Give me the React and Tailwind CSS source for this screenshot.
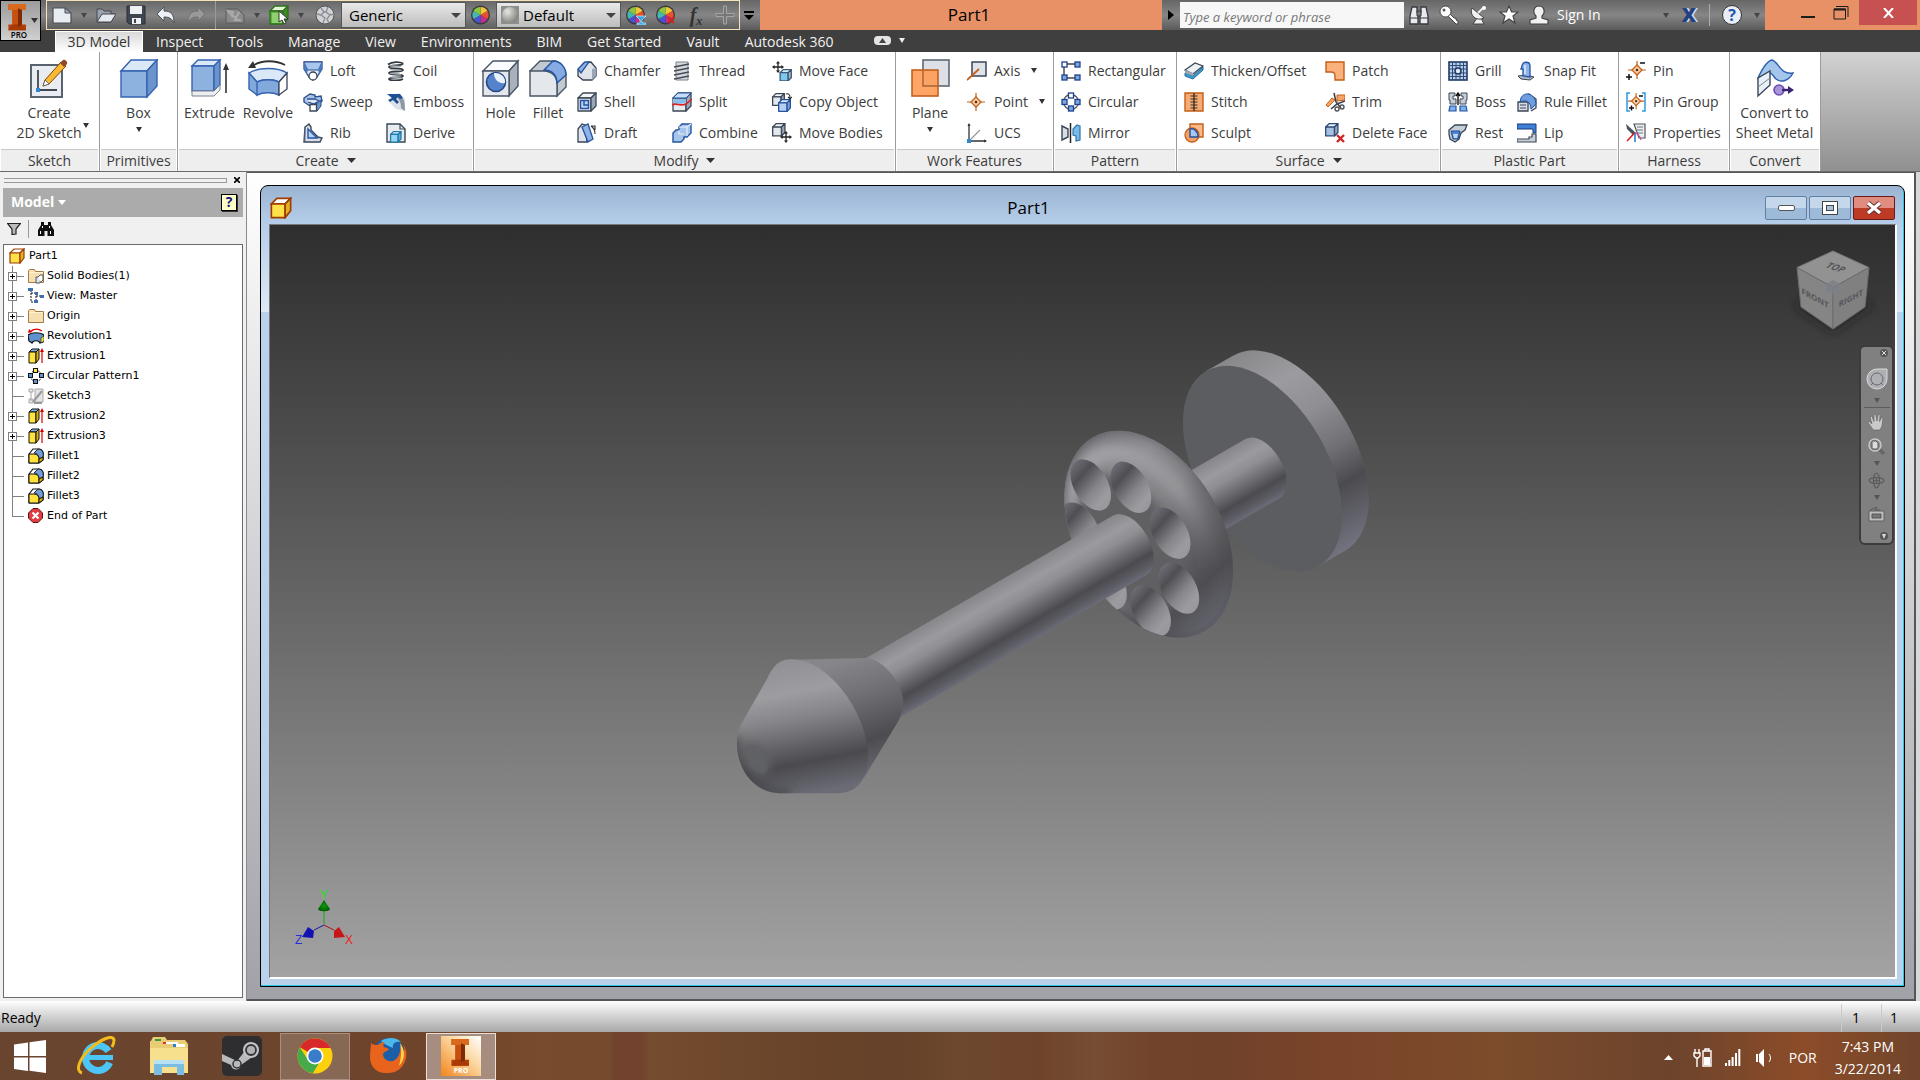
import { useId } from 'react';

const Svg = ({ s = 20, vb = '0 0 20 20', children }) => (
    <svg width={s} height={s} viewBox={vb} fill="none" className="shrink-0" aria-hidden="true">{children}</svg>
);

const Caret = ({ w = 7, color = '#333', className = '' }) => (
    <svg width={w} height="5" viewBox="0 0 10 6" className={`shrink-0 ${className}`} preserveAspectRatio="none" aria-hidden="true">
        <path d="M0 0h10L5 6z" fill={color} />
    </svg>
);

/* ---------- shared bits for the ribbon icons ---------- */

const B = '#2d4f8c';
const D = '#3b4656';
const O = '#c2601c';

const Cube = ({ x = 0, y = 0, s = 1, front = '#c9d3de', top = '#f4f6f9', side = '#9aa7b8', stroke = D }) => (
    <g transform={`translate(${x} ${y}) scale(${s})`} stroke={stroke} strokeWidth={1.3 / Math.max(s, 0.6)} strokeLinejoin="round">
        <path d="M1 6l5-5h13l-5 5z" fill={top} />
        <path d="M1 6h13v13H1z" fill={front} />
        <path d="M14 6l5-5v13l-5 5z" fill={side} />
    </g>
);

const MoveArrows = ({ x, y }) => (
    <g transform={`translate(${x} ${y})`}>
        <path d="M6 2v8M2 6h8" stroke="#222" strokeWidth="1.3" />
        <path d="M6 0l2 2.6H4zM6 12l2-2.6H4zM0 6l2.6-2v4zM12 6L9.4 4v4z" fill="#222" />
    </g>
);

const RedX = ({ x, y, s = 7 }) => (
    <path d={`M${x} ${y}l${s} ${s}M${x + s} ${y}l${-s} ${s}`} stroke="#d02525" strokeWidth="2.4" />
);

const Diamond = ({ x = 0, y = 0 }) => (
    <g transform={`translate(${x} ${y})`}>
        <path d="M9 0v18M0 9h18" stroke={O} strokeWidth="1.2" />
        <path d="M9 4l5 5-5 5-5-5z" fill="#fbcfa6" stroke={O} strokeWidth="1.3" />
        <circle cx="9" cy="9" r="1.3" fill="#5a2a0a" />
    </g>
);

const Node = ({ x, y, fill = '#7fa6dd' }) => (
    <rect x={x} y={y} width="5" height="5" fill={fill} stroke="#1e418e" strokeWidth="1.3" />
);

const small = {
    loft: <Svg><path d="M1 1h18v7l-5 8-4 3-4-3-5-8z" fill="#e4edf8" stroke={B} strokeWidth="1.3" /><path d="M1 1h18l-3 8H4z" fill="#a9c6ec" stroke={B} /><path d="M1 1l4 7-1 5-3-5zM19 1l-4 7 1 5 3-5z" fill="#4c78be" /><circle cx="10" cy="15" r="4" fill="#fff" stroke={D} strokeWidth="1.3" /></Svg>,
    sweep: <Svg><path d="M1 6l6-4 5 1v2l6-1 1 5-4 4-5-1-3 2-6-4z" fill="#a9c5ea" stroke={B} strokeWidth="1.4" /><path d="M4 7h8l4 2-5 3-6-2" stroke={B} strokeWidth="1.3" fill="#dbe7f6" /><path d="M13 12l5-4v6l-4 5z" fill="#6d96d0" stroke={B} /><path d="M7 12.500h6.500V19H7z" fill="#fff" stroke={D} strokeWidth="1.3" /></Svg>,
    rib: <Svg><path d="M2 4l4-3 2 3v3l7 7 4 1-2 4H1z" fill="#d9dfe8" stroke={D} strokeWidth="1.4" /><path d="M5 6l9 9H5z" fill="#b9d1f2" stroke="#2856ac" strokeWidth="1.4" /><path d="M2 4v14" stroke="#5f6c80" /></Svg>,
    coil: <Svg><path d="M2 3.500c4-3 12-3 15-1M17 2.500c0 3-14 1-14 3.500s14 .5 14 3-14 .5-14 3 14 .5 14 3-14 .5-14 3c1 2 10 2 14 0" stroke="#333a42" strokeWidth="1.8" /><path d="M4 4.500l11 1M4 8.500l11 1M4 12.500l11 1M4 16l11 1" stroke="#aab0b8" strokeWidth="1" /></Svg>,
    emboss: <Svg><path d="M5 5l8-4 6 6v12l-9-2-7-7z" fill="#dce1e7" /><path d="M14 4c4 2 5 6 5 15l-4-3c0-5-1-8-4-10z" fill="#8b98a8" /><path d="M1 2h13l3 4-3 1-2-2-2 2 3 3-2 2-4-4-3 2-2-2 4-2z" fill="#1c4f94" /></Svg>,
    derive: <Svg><path d="M1 1h13l5 5v13H1z" fill="#e8ecf0" stroke={D} strokeWidth="1.4" /><path d="M14 1v5h5" stroke={D} strokeWidth="1.2" /><Cube x={4} y={8} s={0.58} front="#9ad6f3" top="#e2f5fd" side="#5fb0da" stroke="#1f79ac" /></Svg>,
    chamfer: <Svg><path d="M1 9l6-7 7-1 5 6v8l-4 4H6l-5-4z" fill="#dfe4ea" stroke={D} strokeWidth="1.4" /><path d="M1 8l7-7h4l-8 11z" fill="#8fb3e4" stroke="#24539f" strokeWidth="1.3" /><path d="M15 8l4-1v8l-4 4z" fill="#9aa6b5" /></Svg>,
    shell: <Svg><Cube front="#e4e8ee" /><path d="M3.500 8.500h8v8h-8z" fill="#bcd3f3" stroke="#24539f" strokeWidth="1.5" /><path d="M7 9v4h4" stroke="#24539f" strokeWidth="1.5" /></Svg>,
    draft: <Svg><path d="M1 6l4-5 3 1 2 17H1z" fill="#dfe4ea" stroke={D} strokeWidth="1.3" /><path d="M5 4l6-3 5 15-5 3z" fill="#8fb3e4" stroke="#24539f" strokeWidth="1.3" /><path d="M14 3h4v4M14 3c3 2 4 5 4 8" stroke="#333" strokeWidth="1.2" /></Svg>,
    thread: <Svg><path d="M4 1h12v18H4z" fill="#d5d9de" stroke="#7a828d" /><path d="M2 6l15-3M2 10l15-3M2 14l15-3M2 18l15-3" stroke="#444b55" strokeWidth="1.5" /></Svg>,
    split: <Svg><Cube front="#e9edf2" /><path d="M1 6l5-5h13l-5 5z" fill="#c4ddf8" stroke="#24539f" /><path d="M1 7h13v5c-4-2-7 2-13 0z" fill="#8dbbea" /><path d="M0 13c4-3 7 2 14-1l6-5" stroke="#d22" strokeWidth="1.6" /></Svg>,
    combine: <Svg><path d="M1 10l3-3h3V4l3-3h9v9l-4 4h-3v2l-3 3H1z" fill="#a6c5ea" stroke="#24539f" strokeWidth="1.4" /><path d="M7 4h8l4-3M15 4v9M7 7v4h5" stroke="#e7f1fc" strokeWidth="1.1" /></Svg>,
    moveFace: <Svg><MoveArrows x={0} y={0} /><Cube x={7.5} y={8} s={0.62} front="#7cc8ee" top="#d6f1fd" side="#a9b5c2" stroke="#3c5878" /></Svg>,
    copyObject: <Svg><Cube x={0} y={1} s={0.65} front="#e4e8ee" /><Cube x={6} y={7} s={0.65} front="#b4cff0" top="#dfebfa" side="#7ba3da" stroke="#24539f" /><path d="M14 2c3-1 4 1 4 4M16 5l2 2 2-2" stroke="#333" strokeWidth="1.1" /></Svg>,
    moveBodies: <Svg><Cube x={0} y={0} s={0.68} front="#e4e8ee" /><MoveArrows x={8} y={8} /></Svg>,
    axis: <Svg><path d="M5 1h14v14H5z" fill="#dfe3e9" stroke={D} strokeWidth="1.5" /><path d="M0 19L12 8" stroke={O} strokeWidth="1.8" /></Svg>,
    point: <Svg><Diamond x={0} y={1} /></Svg>,
    ucs: <Svg><path d="M2 18V1M2 18h17" stroke="#333" strokeWidth="1.3" /><path d="M4 16L13 7" stroke="#9098a2" strokeWidth="1.2" /><path d="M0.500 3L2 0l1.500 3zM17 16.500l3 1.500-3 1.500z" fill="#333" /><rect x="0" y="16" width="4" height="4" fill="#2f86d2" /></Svg>,
    rectangular: <Svg><path d="M3 5v10M5 3h11M5 17h11" stroke="#444" strokeWidth="1.4" /><Node x={1} y={1} fill="#fff" /><Node x={14} y={1} /><Node x={1} y={14} /><Node x={14} y={14} /></Svg>,
    circular: <Svg><circle cx="10" cy="10" r="7.5" stroke="#555" strokeWidth="1.3" /><Node x={7.5} y={1} fill="#fff" /><Node x={1} y={7.5} /><Node x={14} y={7.5} /><Node x={7.5} y={14} /></Svg>,
    mirror: <Svg><path d="M1 3l6 3v8l-6 3z" fill="#d9dee5" stroke={D} strokeWidth="1.4" /><path d="M19 3l-3-1-4 4v6l3 1v5l4-1z" fill="#7db9e4" stroke="#2876ae" strokeWidth="1.2" /><path d="M9.500 0v20" stroke="#222" strokeWidth="1.5" /></Svg>,
    thicken: <Svg><path d="M1 12l8 3 10-9v3l-10 9-8-3z" fill="#3f9bd2" stroke="#1f6ca0" /><path d="M1 9l10-7 8 3-10 8z" fill="#eef1f4" stroke={D} strokeWidth="1.3" /><path d="M1 9v3l8 3v-3z" fill="#9ea8b4" /></Svg>,
    stitch: <Svg><path d="M1 1h18v18H1z" fill="#f6ab72" stroke={O} strokeWidth="1.4" /><path d="M10 1v18" stroke="#4a2a12" strokeWidth="1.4" /><path d="M6.500 4h7M6.500 7h7M6.500 10h7M6.500 13h7M6.500 16h7" stroke="#333" strokeWidth="1.2" /></Svg>,
    sculpt: <Svg><path d="M6 1h13v13H6z" fill="#fbb98a" stroke={O} strokeWidth="1.4" /><circle cx="8" cy="12" r="7" fill="#f3a164" stroke={O} strokeWidth="1.3" /><path d="M6 6c4-1 8 2 8 8H6z" fill="#a8c8f2" stroke="#24539f" strokeWidth="1.4" /></Svg>,
    patch: <Svg><path d="M1 1h18v18h-9v-4c0-3-1-4-4-4H1z" fill="#f9b27c" stroke={O} strokeWidth="1.4" /></Svg>,
    trim: <Svg><path d="M1 13l6-7 3 2-7 7zM12 3h8v5l-8 1z" fill="#f6a367" stroke={O} /><path d="M9 1l2 9 5 6M20 9l-8 3-6 5" stroke="#3b434d" strokeWidth="1.6" /><circle cx="12" cy="17" r="2" stroke="#555" strokeWidth="1.4" /><circle cx="17" cy="15" r="2" stroke="#555" strokeWidth="1.4" /></Svg>,
    deleteFace: <Svg><Cube x={0} y={0} s={0.68} front="#a6bfe2" top="#e8eff9" stroke="#2d4a78" /><RedX x={12} y={12} /></Svg>,
    grill: <Svg><rect x="1" y="1" width="18" height="18" fill="#b9cdea" stroke="#1d3a66" strokeWidth="1.6" /><path d="M4.500 1v18M8 1v18M12 1v18M15.500 1v18M1 4.500h18M1 8h18M1 12h18M1 15.500h18" stroke="#2d4a78" strokeWidth="1" /><circle cx="10" cy="10" r="3" fill="#dfe9f7" stroke="#1d3a66" strokeWidth="1.5" /></Svg>,
    boss: <Svg><path d="M1 1h6v3H5v3h3v5H2V8H1zM19 1h-6v3h2v3h-3v5h6V8h1z" fill="#c8ced6" stroke={D} /><path d="M2 14h6v5H1zM12 14h6l1 5h-7z" fill="#7fb0ee" stroke="#24539f" strokeWidth="1.2" /><path d="M10 13V2M8 4l2-3 2 3" stroke="#111" strokeWidth="1.4" /></Svg>,
    rest: <Svg><path d="M1 7l6-5h12l-2 5-4 3-2 6-4 3-5-3-1-5z" fill="#c6ced8" stroke={D} strokeWidth="1.3" /><path d="M3 8h9l-2 8H5z" fill="#4f86d0" stroke="#1f4c93" /><path d="M5 11h5l-1 4H6z" fill="#c3daf6" /></Svg>,
    snapFit: <Svg><path d="M1 15l8-1 8 2-4 3-9-1z" fill="#aeb8c5" stroke={D} /><path d="M5 5c0-5 8-5 8 0v11l-7-1V8H4z" fill="#8db5ea" stroke="#24539f" strokeWidth="1.3" /><path d="M8 4v9" stroke="#e8f1fc" strokeWidth="1.4" /></Svg>,
    ruleFillet: <Svg><path d="M1 10h10v9H1zM4 7l8-5 7 5v9l-5 3" fill="#d8dee6" stroke={D} strokeWidth="1.3" /><path d="M4 6c3-7 14-5 15 6l-5 5c0-7-5-10-11-7z" fill="#6f9edf" stroke="#24539f" /><path d="M3 13h6M3 16h6" stroke={D} /></Svg>,
    lip: <Svg><path d="M0 1h19v9h-3V6H0z" fill="#3f7fd8" stroke="#173a78" /><path d="M19 11v8H0v-3h12v-2h3v-3z" fill="#c9cfd7" stroke={D} strokeWidth="1.2" /></Svg>,
    pin: <Svg><g transform="translate(2 0)"><Diamond /></g><path d="M14 2h5M0 16h6M3 13v6" stroke="#111" strokeWidth="1.5" /></Svg>,
    pinGroup: <Svg><g transform="translate(2 1) scale(.9)"><Diamond /></g><path d="M4 1H1v18h3M16 1h3v18h-3" stroke="#2e9ae0" strokeWidth="1.5" /><path d="M13 4h4M3 16h5M5.500 13.500v5" stroke="#111" strokeWidth="1.4" /></Svg>,
    properties: <Svg><path d="M8 1h11v14h-6z" fill="#eceff2" stroke="#555" strokeWidth="1.2" /><path d="M11 4h6M11 7h6M11 10h6" stroke="#6a7380" /><path d="M0 1l10 9-3 2L1 6z" fill="#4a525c" /><path d="M9 10c-3 2-5 5-8 8" stroke="#d22" strokeWidth="1.6" /><path d="M9 10v9" stroke="#2d7fd8" strokeWidth="1.6" /><path d="M9 10c3 1 5 3 6 7" stroke="#d0489a" strokeWidth="1.2" /></Svg>,
};

const big = {
    sketch: (
        <Svg s={40} vb="0 0 40 40">
            <rect x="2" y="6" width="31" height="32" fill="#e9edf2" stroke="#59636f" strokeWidth="2" />
            <path d="M9 11v20h19" stroke="#3f4853" strokeWidth="1.8" />
            <rect x="7" y="29" width="4" height="4" fill="#2f86d2" />
            <path d="M14 27l2-6L32 3l5 4-17 18z" fill="#f9b933" stroke="#7a4a08" />
            <path d="M31 4l3-3c2-1 5 2 4 4l-3 3z" fill="#8d4a2a" />
            <path d="M14 27l2-6 4 4z" fill="#fff" stroke="#555" strokeWidth=".8" />
        </Svg>
    ),
    box: (
        <Svg s={40} vb="0 0 40 40">
            <path d="M2 12L12 1h26L28 12z" fill="#dbe8f8" stroke="#3563b0" strokeWidth="1.4" />
            <path d="M2 12h26v26H2z" fill="#8eb2e0" stroke="#3563b0" strokeWidth="1.4" />
            <path d="M28 12L38 1v26L28 38z" fill="#6c93cb" stroke="#3563b0" strokeWidth="1.4" />
        </Svg>
    ),
    extrude: (
        <Svg s={40} vb="0 0 40 40">
            <path d="M2 7l6-6h22l-6 6z" fill="#dbe8f8" stroke="#3563b0" strokeWidth="1.4" />
            <path d="M2 7h22v25H2z" fill="#8eb2e0" stroke="#3563b0" strokeWidth="1.4" />
            <path d="M24 7l6-6v25l-6 6z" fill="#6c93cb" stroke="#3563b0" strokeWidth="1.4" />
            <path d="M2 32h22l6-6v5l-6 6H2z" fill="#eceef1" stroke="#7a8490" />
            <path d="M36 34V8" stroke="#333" strokeWidth="1.6" /><path d="M36 4l3 7h-6z" fill="#333" />
        </Svg>
    ),
    revolve: (
        <Svg s={40} vb="0 0 40 40">
            <path d="M1 14c9-6 29-6 38 0l-8 9c-6-3-16-3-22 0z" fill="#dbe8f8" stroke="#3563b0" strokeWidth="1.4" />
            <path d="M1 14l8 9v13l-8-6zM9 23c6-3 16-3 22 0v13c-6-3-16-3-22 0z" fill="#82a9dc" stroke="#3563b0" strokeWidth="1.4" />
            <path d="M31 23l8-9v16l-8 6z" fill="#fff" stroke="#3b4656" strokeWidth="1.3" />
            <path d="M6 6c8-5 22-5 31 0" stroke="#333" strokeWidth="1.8" /><path d="M0 9l5-7 3 7z" fill="#333" />
        </Svg>
    ),
    hole: (
        <Svg s={40} vb="0 0 40 40">
            <path d="M2 12L12 2h25l-9 10z" fill="#fafbfc" stroke="#4a5564" strokeWidth="1.4" />
            <path d="M28 12l9-10v25L28 37z" fill="#a9b1bc" stroke="#4a5564" strokeWidth="1.4" />
            <path d="M2 12h26v25H2z" fill="#e4e7eb" stroke="#4a5564" strokeWidth="1.4" />
            <circle cx="15" cy="23" r="9.5" fill="#5483cb" stroke="#24488a" strokeWidth="1.6" />
            <path d="M13 14c7-1 12 5 11 10-5 1-11-2-11-10z" fill="#e9f1fb" />
        </Svg>
    ),
    fillet: (
        <Svg s={40} vb="0 0 40 40">
            <path d="M2 12L12 2h14c6 0 12 8 12 14v12l-9 9V25z" fill="#c3c9d1" stroke="#4a5564" strokeWidth="1.4" />
            <path d="M2 12h14c8 0 13 6 13 13v12H2z" fill="#e4e7eb" stroke="#4a5564" strokeWidth="1.4" />
            <path d="M16 11l9-9c8 0 13 7 13 14l-9 8c0-8-5-13-13-13z" fill="#85abe2" stroke="#24539f" strokeWidth="1.4" />
        </Svg>
    ),
    plane: (
        <Svg s={40} vb="0 0 40 40">
            <rect x="13" y="1" width="26" height="26" fill="#dde1e7" stroke="#5f6874" strokeWidth="1.6" />
            <rect x="2" y="11" width="26" height="26" fill="#ff9c55" fillOpacity=".9" stroke="#c2601c" strokeWidth="1.6" />
            <path d="M13 11v16h15" stroke="#a8673a" strokeWidth="1.4" />
        </Svg>
    ),
    convert: (
        <Svg s={40} vb="0 0 40 40">
            <path d="M3 19C8 8 12 2 17 1c7 2 8 15 21 13-4 8-12 10-17 6-3-3-4-6-6-6z" fill="#a5c6ec" stroke="#2f60ad" strokeWidth="1.4" />
            <path d="M3 19l12-7v14L3 37z" fill="#e8f0fa" stroke="#3b4656" strokeWidth="1.4" />
            <path d="M3 28l12-9" stroke="#7a8490" />
            <circle cx="24" cy="31" r="5" fill="#a993dd" stroke="#6b4db0" strokeWidth="1.6" />
            <path d="M27 31h7" stroke="#3a2470" strokeWidth="2.4" /><path d="M33 27l6 4-6 4z" fill="#3a2470" />
        </Svg>
    ),
};

/* ---------- ribbon ---------- */

const SmallButton = ({ icon, label, caret }) => (
    <button type="button" className="flex h-[31px] items-center gap-[7px] whitespace-nowrap text-sm text-[#3c3c3c]">
        {small[icon]}
        <span>{label}</span>
        {caret && <Caret w={6} className="ml-1" />}
    </button>
);

const Col = ({ width = '', items }) => (
    <div className={`flex flex-col items-start ${width}`}>
        {items.map(([icon, label, caret]) => <SmallButton key={label} icon={icon} label={label} caret={caret} />)}
    </div>
);

const BigButton = ({ icon, lines, caret, sideCaret, width }) => (
    <button type="button" className={`flex flex-col items-center self-start pt-1 text-sm leading-5 text-[#3c3c3c] ${width}`}>
        {big[icon]}
        <span className="relative mt-1 whitespace-nowrap text-center">
            {lines.map((l) => <span key={l} className="block">{l}</span>)}
            {sideCaret && <Caret w={6} className="absolute -right-2 top-5" />}
        </span>
        {caret && <Caret w={6} className="mt-1" />}
    </button>
);

const Panel = ({ title, width, caret, children }) => (
    <section className={`flex shrink-0 flex-col border-r border-[#9b9b9b] bg-white ${width}`}>
        <div className="flex h-[97px] pt-[3px]">{children}</div>
        <h2 className="mx-px flex h-[22px] items-center justify-center gap-2 border-t border-[#c9c9c9] bg-[#eeeeee] text-sm text-[#3c3c3c]">
            {title}
            {caret && <Caret w={9} />}
        </h2>
    </section>
);

const Ribbon = () => (
    <div className="flex h-[119px] overflow-hidden bg-linear-to-b from-[#d2d2d2] to-[#909090]">
        <Panel title="Sketch" width="w-[100px]">
            <BigButton icon="sketch" lines={['Create', '2D Sketch']} sideCaret width="w-[98px]" />
        </Panel>
        <Panel title="Primitives" width="w-[78px]">
            <BigButton icon="box" lines={['Box']} caret width="w-full" />
        </Panel>
        <Panel title="Create" width="w-[296px]" caret>
            <BigButton icon="extrude" lines={['Extrude']} width="ml-[3px] w-[57px]" />
            <BigButton icon="revolve" lines={['Revolve']} width="w-[60px] mr-[5px]" />
            <Col width="w-[83px]" items={[['loft', 'Loft'], ['sweep', 'Sweep'], ['rib', 'Rib']]} />
            <Col items={[['coil', 'Coil'], ['emboss', 'Emboss'], ['derive', 'Derive']]} />
        </Panel>
        <Panel title="Modify" width="w-[422px]" caret>
            <BigButton icon="hole" lines={['Hole']} width="ml-[3px] w-[47px]" />
            <BigButton icon="fillet" lines={['Fillet']} width="w-[48px] mr-[5px]" />
            <Col width="w-[95px]" items={[['chamfer', 'Chamfer'], ['shell', 'Shell'], ['draft', 'Draft']]} />
            <Col width="w-[100px]" items={[['thread', 'Thread'], ['split', 'Split'], ['combine', 'Combine']]} />
            <Col items={[['moveFace', 'Move Face'], ['copyObject', 'Copy Object'], ['moveBodies', 'Move Bodies']]} />
        </Panel>
        <Panel title="Work Features" width="w-[158px]">
            <BigButton icon="plane" lines={['Plane']} caret width="ml-1 w-[60px] mr-[7px]" />
            <Col items={[['axis', 'Axis', true], ['point', 'Point', true], ['ucs', 'UCS']]} />
        </Panel>
        <Panel title="Pattern" width="w-[123px]">
            <Col width="ml-[7px]" items={[['rectangular', 'Rectangular'], ['circular', 'Circular'], ['mirror', 'Mirror']]} />
        </Panel>
        <Panel title="Surface" width="w-[264px]" caret>
            <Col width="ml-[7px] w-[141px]" items={[['thicken', 'Thicken/Offset'], ['stitch', 'Stitch'], ['sculpt', 'Sculpt']]} />
            <Col items={[['patch', 'Patch'], ['trim', 'Trim'], ['deleteFace', 'Delete Face']]} />
        </Panel>
        <Panel title="Plastic Part" width="w-[178px]">
            <Col width="ml-[7px] w-[69px]" items={[['grill', 'Grill'], ['boss', 'Boss'], ['rest', 'Rest']]} />
            <Col items={[['snapFit', 'Snap Fit'], ['ruleFillet', 'Rule Fillet'], ['lip', 'Lip']]} />
        </Panel>
        <Panel title="Harness" width="w-[111px]">
            <Col width="ml-[7px]" items={[['pin', 'Pin'], ['pinGroup', 'Pin Group'], ['properties', 'Properties']]} />
        </Panel>
        <Panel title="Convert" width="w-[91px]">
            <BigButton icon="convert" lines={['Convert to', 'Sheet Metal']} width="w-[89px]" />
        </Panel>
    </div>
);

/* ---------- title bar ---------- */

const InventorMark = () => (
    <g>
        <path d="M3 0h22v7h-5v17h5v7H3v-7h5V7H3z" fill="#b5400c" />
        <path d="M3 0h22v7h-5L8 7H3z" fill="#d9691d" />
        <path d="M8 7l7 0v17H8z" fill="#c8500f" />
        <path d="M8 24h12l5 7H3z" fill="#a83a08" />
        <path d="M15 5l5 2v17l-5 3z" fill="#7e2a05" />
    </g>
);

const ColorWheel = ({ children }) => (
    <Svg>
        <circle cx="9.5" cy="10" r="9.5" fill="#3a3a3a" />
        <path d="M9.500 10V2a8 8 0 0 1 7 4z" fill="#f2c43a" />
        <path d="M9.500 10l7-4a8 8 0 0 1 0 8z" fill="#e8502e" />
        <path d="M9.500 10l7 4a8 8 0 0 1-7 4z" fill="#c02f8e" />
        <path d="M9.500 10v8a8 8 0 0 1-7-4z" fill="#4a52d0" />
        <path d="M9.500 10l-7 4a8 8 0 0 1 0-8z" fill="#45b6b4" />
        <path d="M9.500 10l-7-4a8 8 0 0 1 7-4z" fill="#8ac63e" />
        {children}
    </Svg>
);

const Quick = ({ label, children, width = 'w-[30px]' }) => (
    <button type="button" aria-label={label} className={`flex h-full items-center justify-center ${width}`}>{children}</button>
);

const StyleSelect = ({ label, value, ball }) => (
    <div className="relative h-[26px] w-[125px] border border-[#555] bg-linear-to-b from-[#e9e9e9] to-[#bdbdbd]">
        <select aria-label={label} className={`h-full w-full appearance-none text-[15px] leading-none text-black outline-none ${ball ? 'pl-[26px]' : 'pl-[7px]'}`}>
            <option>{value}</option>
        </select>
        {ball && (
            <span className="pointer-events-none absolute left-1 top-[3px] h-[18px] w-[18px] bg-[#8e8e8e] p-px">
                <span className="block h-full w-full rounded-full bg-radial-[at_35%_30%] from-[#e6e6e2] to-[#63635f]" />
            </span>
        )}
        <Caret w={10} color="#444" className="pointer-events-none absolute right-1 top-[10px]" />
    </div>
);

const TitleBar = () => (
    <header className="flex h-[30px] bg-[#e89066]">
        <div className="flex h-full bg-linear-to-b from-[#666666] via-[#868686] to-[#5b5b5b] pl-[46px]">
            <div className="flex h-full items-center border border-[#f2e3bb]">
                <Quick label="New">
                    <Svg><path d="M1 3h12l6 5v10H1z" fill="#e9edf2" stroke="#4a4f57" strokeWidth="1.2" /><path d="M13 3v5h6z" fill="#a7afba" stroke="#4a4f57" /></Svg>
                </Quick>
                <Quick label="New options" width="w-[14px]"><Caret w={6} color="#444" /></Quick>
                <Quick label="Open">
                    <Svg><path d="M1 17V4h5l2 2h7v3h4l-4 8z" fill="#9aa2ad" stroke="#42474f" /><path d="M1 17L6 9h14l-5 8z" fill="#e6e9ee" stroke="#42474f" /></Svg>
                </Quick>
                <Quick label="Save">
                    <Svg><path d="M1 1h18v18H3l-2-2z" fill="#3f4650" stroke="#2a2f36" /><path d="M4 1h12v8H4zM6 13h9v6H6z" fill="#eef0f3" /><path d="M8 14h2v4H8z" fill="#3f4650" /></Svg>
                </Quick>
                <Quick label="Undo">
                    <Svg><path d="M1 9l7-7v4c7 0 10 3 10 12-2-4-4-6-10-6v4z" fill="#eceff3" stroke="#4c525b" /></Svg>
                </Quick>
                <Quick label="Redo">
                    <Svg><path d="M19 9l-7-7v4C5 6 2 9 2 18c2-4 4-6 10-6v4z" fill="#999" stroke="#707070" /></Svg>
                </Quick>
                <span className="mx-1 h-full w-px bg-[#9a9a9a]" />
                <Quick label="Update">
                    <Svg><path d="M1 4h12l6 6v8H1z" fill="#8a8a8a" stroke="#5a5a5a" /><path d="M3 6l5 1-1 4zM6 9l6 5M14 7l-4 8h6" stroke="#aaa" strokeWidth="2" /></Svg>
                </Quick>
                <Quick label="Update options" width="w-[14px]"><Caret w={6} color="#444" /></Quick>
                <Quick label="Select">
                    <Svg><Cube front="#5db43f" top="#dff3d2" side="#3f8a28" stroke="#2f6f1d" /><path d="M3 8h10v10H3z" fill="#8ed070" /><path d="M10 6l9 8h-4l2 4-2 1-2-4-3 2z" fill="#fff" stroke="#333" /></Svg>
                </Quick>
                <Quick label="Select options" width="w-[14px]"><Caret w={6} color="#444" /></Quick>
                <Quick label="Material" width="w-[33px]">
                    <Svg><circle cx="10" cy="10" r="9" fill="#cfd1d4" stroke="#555" /><path d="M6 3l3 4-3 3 4 3-2 5M13 2l-2 5 4 3-3 4 2 4M2 9l4 1M15 10l4-1M9 7h3" stroke="#8a8d92" strokeWidth="1.3" /></Svg>
                </Quick>
                <StyleSelect label="Material style" value="Generic" />
                <Quick label="Appearance"><ColorWheel /></Quick>
                <StyleSelect label="Appearance style" value="Default" ball />
                <Quick label="Adjust appearance"><ColorWheel><path d="M10 11h10l-4 4v3h4v2h-9v-2h3v-3z" fill="#3ba7e0" stroke="#dff" strokeWidth=".6" /></ColorWheel></Quick>
                <Quick label="Clear appearance"><ColorWheel><RedX x={12} y={12} s={6} /></ColorWheel></Quick>
                <Quick label="Parameters"><span className="font-['Liberation_Serif',serif] text-xl font-bold italic leading-none text-[#333]">f<sub className="text-xs">x</sub></span></Quick>
                <Quick label="Add" width="w-[28px]">
                    <Svg><path d="M8.500 1h3v7.500H19v3h-7.500V19h-3v-7.500H1v-3h7.500z" fill="#777" stroke="#a5a5a5" /></Svg>
                </Quick>
            </div>
            <button type="button" aria-label="Customize" className="flex w-5 flex-col items-center justify-center gap-[2px] pr-[3px]">
                <span className="h-[2px] w-[10px] bg-black" />
                <Caret w={10} color="#000" />
            </button>
        </div>

        <h1 className="flex flex-1 items-center justify-center pl-4 text-[17px] text-black">Part1</h1>

        <div className="flex h-full items-center bg-linear-to-b from-[#666666] via-[#868686] to-[#5b5b5b]">
            <button type="button" aria-label="Collapse search" className="flex h-full w-[18px] items-center justify-center">
                <svg width="6" height="10" viewBox="0 0 6 10"><path d="M0 0l6 5-6 5z" fill="#000" /></svg>
            </button>
            <input aria-label="Search" placeholder="Type a keyword or phrase" className="h-[26px] w-[224px] bg-[#f7f7f7] pl-[3px] pt-1 text-[13px] italic placeholder:text-[#777]" />
            <Quick label="Find">
                <Svg><path d="M3 2h5v5l1 3v9H1v-8zM12 2h5l2 9v8h-8v-9l1-3z" fill="#e8eaee" stroke="#34393f" strokeWidth="1.3" /><path d="M8 6h4v5H8zM1 13h8M11 13h8" fill="#777" stroke="#34393f" /></Svg>
            </Quick>
            <Quick label="License">
                <Svg><path d="M8 10l9 9h2v-3l-2-1v-2h-2l-5-5" fill="#fff" stroke="#444" /><circle cx="6.5" cy="6.5" r="5.5" fill="#fff" stroke="#444" /><circle cx="5" cy="5" r="1.5" fill="#555" /></Svg>
            </Quick>
            <Quick label="Communication">
                <Svg><path d="M8 13l-4 6h11l-3-6" fill="#f1f1f1" stroke="#444" /><path d="M3 3c-3 7 4 14 12 10z" fill="#f1f1f1" stroke="#444" /><path d="M9 8l5-5" stroke="#f1f1f1" strokeWidth="1.8" /><circle cx="15" cy="3" r="2" fill="#fff" /></Svg>
            </Quick>
            <Quick label="Favorites">
                <Svg><path d="M10 1l2.600 6H19l-5 4 2 7-6-4-6 4 2-7-5-4h6.400z" fill="#fff" stroke="#444" strokeWidth="1.2" /></Svg>
            </Quick>
            <Quick label="Account">
                <Svg><path d="M1 19v-4l6-2v-2C3 7 5 1 10 1s7 6 3 10v2l6 2v4z" fill="#f1f1f1" stroke="#444" strokeWidth="1.2" /></Svg>
            </Quick>
            <button type="button" className="w-[104px] pl-[3px] text-left text-sm text-white">Sign In</button>
            <Quick label="Sign in options" width="w-4"><Caret w={6} color="#444" /></Quick>
            <Quick label="Exchange"><span className="text-xl font-extrabold leading-none text-[#24407e] [text-shadow:2px_0_#cfd9ee]">X</span></Quick>
            <span className="mx-[5px] h-[22px] w-px bg-[#aaa]" />
            <Quick label="Help" width="w-[34px]">
                <span className="flex h-5 w-5 items-center justify-center rounded-full border border-[#333] bg-[#e9eef6] text-base font-bold text-[#2456b0]">?</span>
            </Quick>
            <Quick label="Help options" width="w-4"><Caret w={6} color="#444" /></Quick>
        </div>

        <div className="flex items-start pl-[28px] pr-[3px]">
            <button type="button" aria-label="Minimize" className="flex h-[25px] w-[30px] items-center justify-center pt-2">
                <span className="h-[2px] w-[14px] bg-[#1d1d1d]" />
            </button>
            <button type="button" aria-label="Restore" className="flex h-[25px] w-[36px] items-center justify-center">
                <svg width="16" height="15" viewBox="0 0 16 15" fill="none" stroke="#1d1d1d"><path d="M3 1.500h12V12" /><path d="M1 4h11.500v10H1z" /><path d="M1 4.500h11.500" strokeWidth="2" /></svg>
            </button>
            <button type="button" aria-label="Close" className="flex h-[25px] w-[58px] items-center justify-center bg-[#c75050]">
                <svg width="11" height="10" viewBox="0 0 11 10"><path d="M1 0l9 10M10 0L1 10" stroke="#fff" strokeWidth="2" /></svg>
            </button>
        </div>
    </header>
);

const tabs = ['Inspect', 'Tools', 'Manage', 'View', 'Environments', 'BIM', 'Get Started', 'Vault', 'Autodesk 360'];

const Tabs = () => (
    <nav className="flex h-[22px] items-end bg-[#3f3f3f] pl-[55px] text-sm leading-5 text-[#f1f1f1]">
        <button type="button" className="h-[21px] w-[88px] border border-b-0 border-white bg-linear-to-b from-[#d9d9d9] to-white text-[#333]">3D Model</button>
        {tabs.map((t) => <button key={t} type="button" className="h-[21px] pl-[13px] pr-3">{t}</button>)}
        <button type="button" aria-label="Ribbon display" className="mb-[7px] ml-7 flex h-[9px] w-[17px] items-center justify-center rounded-sm bg-[#e4e4e4]">
            <Caret w={7} color="#444" className="rotate-180" />
        </button>
        <button type="button" aria-label="Ribbon options" className="mb-[9px] ml-2"><Caret w={6} color="#eee" /></button>
    </nav>
);

/* ---------- model browser ---------- */

const Extrusion = () => (
    <Svg s={16} vb="0 0 16 16"><path d="M1 4l3-3h7L9 4z" fill="#7fb0ea" stroke="#111" /><path d="M1 4h7v11H1z" fill="#ffe23a" stroke="#111" /><path d="M8 4l3-3v10l-3 4z" fill="#d8b400" stroke="#111" /><path d="M14 15V3" stroke="#d00" strokeWidth="1.2" /><path d="M14 0l2 4h-4z" fill="#d00" /></Svg>
);
const FilletIcon = () => (
    <Svg s={16} vb="0 0 16 16"><path d="M1 6l4-5h6c3 0 5 3 4 7v4l-4 3H1z" fill="#fff" stroke="#111" strokeWidth="1.2" /><path d="M6 5l4-4c4 0 6 4 5 8l-4 2c0-4-2-6-5-6z" fill="#6f9fdc" stroke="#223" /><path d="M1 6h5c3 0 5 2 5 5v4H1z" fill="#ffe23a" stroke="#111" /><path d="M11 11l4-2v3l-4 3z" fill="#e0b800" stroke="#111" /></Svg>
);
const Folder = ({ children }) => (
    <Svg s={16} vb="0 0 16 16"><path d="M.5 2.500l1-1h5l1 2h8v11H.5z" fill="#f6dfb0" stroke="#a07a48" /><path d="M1 4.500h14" stroke="#fff3d6" />{children}</Svg>
);
const PartCube = ({ s = 16 }) => (
    <Svg s={s} vb="0 0 16 16"><path d="M1 5l4-4h10l-4 4z" fill="#fff" stroke="#a03c00" strokeWidth="1.2" /><path d="M1 5h10v10H1z" fill="#ffe24a" stroke="#a03c00" strokeWidth="1.2" /><path d="M11 5l4-4v9l-4 5z" fill="#e3b021" stroke="#a03c00" strokeWidth="1.2" /></Svg>
);

const nodes = [
    ['Solid Bodies(1)', true, <Folder><path d="M8 9h5l-1 6H8z" fill="#dfe5ee" stroke="#555" /><path d="M10 9l2-2h3v5l-2 2" fill="#fff" stroke="#555" /></Folder>],
    ['View: Master', true, <Svg s={16} vb="0 0 16 16"><path d="M3 2v12h3M3 5h4M8 5v8M8 8h5" stroke="#111" strokeDasharray="2 1" /><path d="M0 0h5v3H0zM7 4h3v3H7zM12 7h4v3h-4zM6 12h4v3H6z" fill="#3c6fae" /></Svg>],
    ['Origin', true, <Folder />],
    ['Revolution1', true, <Svg s={16} vb="0 0 16 16"><path d="M0 7c4-3 12-3 16 0l-1 7-3 1c-1-3-7-3-8 0l-3-2z" fill="#5f93cf" stroke="#111" strokeWidth="1.2" /><path d="M13 10l3-2v5l-3 2z" fill="#ffe23a" stroke="#111" strokeWidth=".6" /><path d="M2 4c4-4 9-3 12-1" stroke="#d00" strokeWidth="1.4" /><path d="M0 5l1-4 3 3z" fill="#d00" /></Svg>],
    ['Extrusion1', true, <Extrusion />],
    ['Circular Pattern1', true, <Svg s={16} vb="0 0 16 16"><circle cx="8" cy="8" r="5.5" stroke="#111" strokeDasharray="2 1" /><rect x="5.5" y=".5" width="4" height="4" fill="#ffe23a" stroke="#111" /><rect x=".5" y="5.5" width="4" height="4" fill="#5f93cf" stroke="#111" /><rect x="11.5" y="5.5" width="4" height="4" fill="#5f93cf" stroke="#111" /><rect x="5.5" y="11.5" width="4" height="4" fill="#5f93cf" stroke="#111" /></Svg>],
    ['Sketch3', false, <Svg s={16} vb="0 0 16 16"><path d="M1 1h4v3H1zM3 4v9M1 11h4v4H1zM6 12l8-9M7 1h8v13H7z" stroke="#aaa" fill="#e4e4e4" /><path d="M5 14l9-11M6 15h8" stroke="#999" strokeWidth="2" /></Svg>],
    ['Extrusion2', true, <Extrusion />],
    ['Extrusion3', true, <Extrusion />],
    ['Fillet1', false, <FilletIcon />],
    ['Fillet2', false, <FilletIcon />],
    ['Fillet3', false, <FilletIcon />],
    ['End of Part', false, <Svg s={16} vb="0 0 16 16"><path d="M5 .5h5L14.500 5v5L10 14.500H5L.5 10V5z" fill="#e23b41" stroke="#5a1115" /><path d="M4.500 4.500l6 6M10.500 4.500l-6 6" stroke="#fff" strokeWidth="2.2" /></Svg>],
];

const Guide = ({ expandable, last }) => (
    <svg width="24" height="20" viewBox="0 0 24 20" className="shrink-0" shapeRendering="crispEdges" aria-hidden="true">
        <path d={last ? 'M8.500 0v10.500H20' : 'M8.500 0v20M8.500 10.500H20'} stroke="#808080" fill="none" />
        {expandable && (
            <>
                <rect x="4.5" y="6.5" width="8" height="8" fill="#fff" stroke="#808080" />
                <path d="M6 10.500h5M8.500 8v5" stroke="#000" />
            </>
        )}
    </svg>
);

const Browser = () => (
    <aside className="flex w-[247px] shrink-0 flex-col border-r border-[#8a8a8a] bg-[#f0f0f0] px-[3px] pb-[3px]">
        <div className="flex h-4 items-center gap-1 pl-px">
            <span className="h-[5px] flex-1 border-y border-r border-[#9a9a9a]" />
            <button type="button" aria-label="Close browser" className="flex w-3 justify-center">
                <svg width="6" height="6" viewBox="0 0 6 6"><path d="M0 0l6 6M6 0L0 6" stroke="#000" strokeWidth="1.6" /></svg>
            </button>
        </div>
        <div className="flex h-[29px] items-center bg-[#ababab] pb-px pl-2 pr-[6px]">
            <button type="button" className="flex items-center gap-1 text-sm font-bold text-white">Model<Caret w={8} color="#fff" /></button>
            <button type="button" aria-label="Help" className="ml-auto flex h-[17px] w-4 items-center justify-center border border-black bg-[#ffffc8] text-sm font-bold leading-none text-[#14147a] shadow-[1px_1px_0_#333]">?</button>
        </div>
        <div className="flex h-[27px] items-center pb-1 pl-1">
            <button type="button" aria-label="Filter">
                <svg width="14" height="12" viewBox="0 0 14 12" fill="none"><path d="M.5 .5h13L9 6v5l-4 .5V6z" fill="#bbb" stroke="#222" strokeWidth="1.2" /></svg>
            </button>
            <span className="mx-[7px] h-[18px] w-px bg-[#999]" />
            <button type="button" aria-label="Find in browser" className="ml-[2px]">
                <svg width="16" height="14" viewBox="0 0 16 14"><path d="M3 0h3v3h4V0h3v3l3 5v6H9.500V9h-3v5H0V8l3-5z" fill="#111" /><path d="M2 9h1v3H2zM12 9h1v3h-1zM4 4h1v2H4zM11 4h1v2h-1z" fill="#fff" /></svg>
            </button>
        </div>
        <ul className="flex-1 border border-[#6b6b6b] bg-white pt-px font-['DejaVu_Sans',sans-serif] text-[11px] leading-5 text-black">
            <li className="flex h-5 items-center gap-1 pl-[5px]"><PartCube />Part1</li>
            {nodes.map(([label, expandable, icon], i) => (
                <li key={label} className="flex h-5 items-center whitespace-nowrap">
                    <Guide expandable={expandable} last={i === nodes.length - 1} />
                    {icon}
                    <span className="ml-[3px]">{label}</span>
                </li>
            ))}
        </ul>
    </aside>
);

/* ---------- 3D view ---------- */

// ellipse of a circle seen along the shaft, placed at distance u on the axis
const Disc = ({ u, r, ...rest }) => <ellipse cx={u} cy={0} rx={r * 0.577} ry={r} {...rest} />;

const AXIS = 'translate(1262.7 467.9) rotate(-30)';

const holeAngles = [-95, -43.6, 7.9, 59.3, 110.7, 162.1, 213.6];

const holes = holeAngles.map((deg) => {
    const a = (deg * Math.PI) / 180;
    return { x: -153.5 + 72 * 0.577 * Math.cos(a), y: 72 * Math.sin(a) };
});

const Model = () => {
    const id = useId();
    const url = (n) => `url(#${id}${n})`;
    return (
        <svg viewBox="270 224 1625 753" preserveAspectRatio="xMidYMid meet" className="h-full w-full" role="img" aria-label="Part1 model">
            <defs>
                <linearGradient id={`${id}shaft`} gradientUnits="userSpaceOnUse" x1="0" y1="-34" x2="0" y2="34">
                    <stop offset="0" stopColor="#87878b" /><stop offset=".22" stopColor="#9b9b9f" /><stop offset=".38" stopColor="#8f8f93" />
                    <stop offset=".58" stopColor="#6c6c70" /><stop offset=".76" stopColor="#4b4b4f" /><stop offset=".9" stopColor="#5b5b63" /><stop offset="1" stopColor="#6c6c78" />
                </linearGradient>
                <linearGradient id={`${id}rim`} gradientUnits="userSpaceOnUse" x1="0" y1="-112" x2="0" y2="112">
                    <stop offset="0" stopColor="#88888b" /><stop offset=".2" stopColor="#9c9ca0" /><stop offset=".38" stopColor="#8f8f93" />
                    <stop offset=".58" stopColor="#707074" /><stop offset=".74" stopColor="#4b4b4f" /><stop offset=".9" stopColor="#63636c" /><stop offset="1" stopColor="#737380" />
                </linearGradient>
                <linearGradient id={`${id}torus`} gradientUnits="userSpaceOnUse" x1="-160" y1="-105" x2="-110" y2="112">
                    <stop offset="0" stopColor="#7c7c80" /><stop offset=".2" stopColor="#8e8e92" /><stop offset=".4" stopColor="#838387" />
                    <stop offset=".62" stopColor="#66666a" /><stop offset=".82" stopColor="#4d4d51" /><stop offset="1" stopColor="#686873" />
                </linearGradient>
                <linearGradient id={`${id}hi`} gradientUnits="userSpaceOnUse" x1="-150" y1="-100" x2="-110" y2="60">
                    <stop offset="0" stopColor="#a2a2a6" /><stop offset=".55" stopColor="#949498" /><stop offset="1" stopColor="#66666a" stopOpacity="0" />
                </linearGradient>
                <linearGradient id={`${id}hole`} x1=".3" y1="0" x2=".5" y2="1">
                    <stop offset="0" stopColor="#707079" /><stop offset=".28" stopColor="#4f4f53" /><stop offset=".62" stopColor="#87878b" /><stop offset=".85" stopColor="#9c9ca0" /><stop offset="1" stopColor="#98989c" />
                </linearGradient>
                <linearGradient id={`${id}back`} gradientUnits="userSpaceOnUse" x1="845" y1="657" x2="884" y2="770">
                    <stop offset="0" stopColor="#87878b" /><stop offset=".3" stopColor="#737377" /><stop offset=".72" stopColor="#4c4c50" /><stop offset="1" stopColor="#696975" />
                </linearGradient>
                <linearGradient id={`${id}cone`} gradientUnits="userSpaceOnUse" x1="774" y1="655" x2="802" y2="795">
                    <stop offset="0" stopColor="#8e8e92" /><stop offset=".28" stopColor="#9d9da1" /><stop offset=".45" stopColor="#87878b" />
                    <stop offset=".62" stopColor="#68686c" /><stop offset=".78" stopColor="#4a4a4e" /><stop offset="1" stopColor="#6b6b76" />
                </linearGradient>
                <radialGradient id={`${id}y`}><stop offset="0" stopColor="#0d9a0d" /><stop offset="1" stopColor="#056005" /></radialGradient>
                <filter id={`${id}soft`} x="-40%" y="-40%" width="180%" height="180%"><feGaussianBlur stdDeviation="5" /></filter>
                <clipPath id={`${id}coneClip`}>
                    <ellipse cx={-516} cy={0} rx={42.2} ry={73.2} transform={AXIS} />
                    <path d="M794 659C785 658 777 661 772 669L743 720C736 731 735 744 738 756C743 778 760 793 779 793H840L830 730z" />
                </clipPath>
                <clipPath id={`${id}torusClip`}><ellipse cx="-131.5" cy="0" rx="73" ry="112" /></clipPath>
            </defs>

            <g transform={AXIS}>
                {/* end plate */}
                <path d="M0-112.700H31A65 112.700 0 0 1 31 112.700H0z" fill={url('rim')} />
                <Disc u={0} r={112.7} fill="#5c5d60" />
                <path d="M-125-34.200H0A19.700 34.200 0 0 1 0 34.200H-125z" fill={url('shaft')} />

                {/* grip */}
                <ellipse cx="-131.5" cy="0" rx="73" ry="112" fill={url('torus')} />
                <g clipPath={url('torusClip')}>
                    <ellipse cx="-140" cy="0" rx="58" ry="93" stroke={url('hi')} strokeWidth="18" fill="none" filter={url('soft')} />
                    <ellipse cx="-131.5" cy="0" rx="76" ry="115" stroke="#4a4a4e" strokeOpacity=".6" strokeWidth="8" fill="none" filter={url('soft')} />
                </g>
                <Disc u={-151} r={76} fill="#606164" filter={url('soft')} />
                <g clipPath={url('torusClip')}>
                    {holes.map((h) => <ellipse key={h.y} cx={h.x} cy={h.y} rx="17" ry="28" fill={url('hole')} />)}
                </g>
                <path d="M-444-34.200H-153.500A19.700 34.200 0 0 1-153.500 34.200H-444z" fill={url('shaft')} />
            </g>

            {/* tip */}
            <path d="M793 659.300L866 657.500C884 659 903 684 903 702C903 708 901 715 898 721L864 777L830 792L780 720z" fill={url('back')} />
            <g clipPath={url('coneClip')}>
                <path d="M720 640h160v160H720z" fill={url('cone')} />
                <path d="M734 736C734 770 760 799 790 792" stroke="#404044" strokeOpacity=".6" strokeWidth="12" fill="none" filter={url('soft')} />
                <ellipse cx="756" cy="759" rx="12" ry="18" transform="rotate(-30 756 759)" fill="#606165" filter={url('soft')} />
            </g>
            <ellipse cx="756" cy="759" rx="9" ry="16" transform="rotate(-30 756 759)" fill="#616266" fillOpacity=".6" />

            {/* axis triad */}
            <path d="M323 924V905" stroke="#12b012" /><path d="M323 925l-10 5" stroke="#1515aa" /><path d="M323 925l10 5" stroke="#aa1515" />
            <path d="M323 900l6 9c0 3-12 3-12 0z" fill={url('y')} />
            <path d="M301 937l6-10 6 4-1 7z" fill="#1212b0" /><path d="M344 937l-6-10-5 4v7z" fill="#c81616" />
            <g fontFamily="Liberation Sans, sans-serif" fontSize="12">
                <text x="319" y="899" fill="#1ee01e">Y</text><text x="294" y="944" fill="#2a2ae0">Z</text><text x="344" y="944" fill="#ee2222">X</text>
            </g>
        </svg>
    );
};

const ViewCube = () => (
    <svg width="90" height="96" viewBox="0 0 90 96" className="absolute right-[17px] top-5" role="img" aria-label="View cube">
        <defs><filter id="cubeShadow" x="-40%" y="-40%" width="180%" height="180%"><feGaussianBlur stdDeviation="5" /></filter></defs>
        <path d="M5 60l40-20 40 20-40 28z" fill="#222" fillOpacity=".6" filter="url(#cubeShadow)" />
        <path d="M45 6l36 16.500-36 20L9 22.500z" fill="#929292" stroke="#777" />
        <path d="M9 22.500l36 20V84L13 62z" fill="#858585" stroke="#6c6c6c" />
        <path d="M81 22.500l-36 20V84l32-22z" fill="#808080" stroke="#6c6c6c" />
        <path d="M45 35l7 4v7l-7 4-7-4v-7z" fill="#7c7f86" fillOpacity=".8" />
        <g fontFamily="Open Sans, sans-serif" fontWeight="700" fontSize="9" fill="#55565a" textAnchor="middle">
            <text transform="translate(45 25) rotate(18) skewX(-30)">TOP</text>
            <text transform="translate(27 56) skewY(29)" fontSize="8">FRONT</text>
            <text transform="translate(63 56) skewY(-27)" fontSize="8">RIGHT</text>
        </g>
    </svg>
);

const NavBar = () => (
    <div className="absolute right-px top-[120px] flex w-[35px] flex-col items-center rounded-md border-2 border-[#3c3c3c] bg-[#808080] pb-[3px] pt-[2px]">
        <button type="button" aria-label="Close navigation bar" className="mr-1 flex h-2 w-2 items-center justify-center self-end rounded-full bg-[#555]">
            <svg width="4" height="4" viewBox="0 0 4 4"><path d="M0 0l4 4M4 0L0 4" stroke="#ddd" /></svg>
        </button>
        <button type="button" aria-label="Steering wheel" className="mt-[11px]">
            <svg width="22" height="22" viewBox="0 0 22 22" fill="none"><path d="M11 1h10v10A10 10 0 1 1 11 1z" fill="#aeb0b3" stroke="#dadada" /><circle cx="11" cy="11" r="6" stroke="#66696d" /><path d="M5 17l2-2M17 17l-2-2" stroke="#66696d" /></svg>
        </button>
        <Caret w={6} color="#555" className="mt-2" />
        <span className="mt-1 h-px w-[26px] bg-[#5c5c5c]" />
        <button type="button" aria-label="Pan" className="mt-[6px]">
            <svg width="17" height="17" viewBox="0 0 17 17"><path d="M5 16c-1-3-4-5-5-8l1-1 3 3-2-7 1-1 1 .5 2 5L6 1l1-1 1 1 1 6 1-6 1-.5 1 1-.500 6 2-4 1.500.500-1 8-2 4z" fill="#c9c9c9" stroke="#666" strokeWidth=".7" /></svg>
        </button>
        <button type="button" aria-label="Zoom" className="mt-[7px]">
            <svg width="17" height="17" viewBox="0 0 17 17" fill="none"><path d="M10 10l6 6" stroke="#666" strokeWidth="3.5" /><circle cx="7" cy="7" r="6" fill="#8f8f8f" stroke="#c9c9c9" strokeWidth="1.4" /><path d="M4 3h4l2 2v6H4z" fill="#ddd" stroke="#555" /></svg>
        </button>
        <Caret w={6} color="#555" className="mt-[6px]" />
        <button type="button" aria-label="Orbit" className="mt-[6px]">
            <svg width="17" height="17" viewBox="0 0 17 17" fill="none" stroke="#5b5b5b" strokeWidth="1.2"><ellipse cx="8.5" cy="8.5" rx="3" ry="7.5" /><ellipse cx="8.5" cy="8.5" rx="7.5" ry="3" /><path d="M6 8.500h5M8.500 6v5" /></svg>
        </button>
        <Caret w={6} color="#555" className="mt-[6px]" />
        <button type="button" aria-label="Look at" className="mt-[6px]">
            <svg width="17" height="16" viewBox="0 0 17 16" fill="none"><path d="M1 5h15v10H1z" fill="#bdbdbd" stroke="#5e5e5e" /><path d="M4 8h9v4H4z" fill="#777" stroke="#555" /><path d="M2 4l7-3-2 3h5" stroke="#5b5b5b" /></svg>
        </button>
        <button type="button" aria-label="Navigation options" className="mr-1 mt-[10px] flex h-2 w-2 items-center justify-center self-end rounded-full bg-[#555]">
            <Caret w={4} color="#ddd" />
        </button>
    </div>
);

const WinButton = ({ label, tone, children }) => (
    <button type="button" aria-label={label} className={`flex h-6 w-[42px] items-center justify-center rounded-xs border ${tone}`}>{children}</button>
);

const blueTone = 'border-[#5f7fa3] bg-linear-to-b from-[#c5d7ea] from-50% to-[#9dbad8] to-50%';
const redTone = 'border-[#6b1a1a] bg-linear-to-b from-[#e08c80] from-50% to-[#bd3a25] to-50%';

const DocumentWindow = () => (
    <main className="flex min-w-0 flex-1 border-r-4 border-[#d8d8d8] bg-white">
        <div className="flex min-w-0 flex-1 border-b-2 border-r-2 border-t border-[#55565b] bg-linear-to-b from-white to-[#a1a2a8] pb-3 pl-[13px] pr-[9px] pt-[12px]">
            <div className="flex min-w-0 flex-1 flex-col rounded-t-lg border border-black bg-[linear-gradient(#9ab4d2_0,#b5cde8_37px,#dde9f6_126px,#b9d1ea_126px)] pb-[7px] pl-2 pr-[7px] shadow-[inset_-1px_-1px_0_#25c8e0]">
                <div className="flex h-[38px] shrink-0 items-center pl-px pr-[2px] pt-[6px]">
                    <PartCube s={22} />
                    <h2 className="flex-1 text-center text-[17px] text-black">Part1</h2>
                    <div className="flex gap-[2px]">
                        <WinButton label="Minimize document" tone={blueTone}><span className="h-[6px] w-[17px] rounded-xs border border-[#555] bg-white" /></WinButton>
                        <WinButton label="Restore document" tone={blueTone}><span className="flex h-[14px] w-4 items-center justify-center border border-[#444] bg-white"><span className="h-[6px] w-2 border border-[#444] bg-[#a9c2dd]" /></span></WinButton>
                        <WinButton label="Close document" tone={redTone}>
                            <svg width="18" height="14" viewBox="0 0 18 14"><path d="M3 2l12 10M15 2L3 12" stroke="#5b2a2a" strokeWidth="5" /><path d="M3 2l12 10M15 2L3 12" stroke="#fff" strokeWidth="3.4" /></svg>
                        </WinButton>
                    </div>
                </div>
                <div className="relative min-h-0 flex-1 border border-b-2 border-r-2 border-[#777] border-b-white border-r-white bg-linear-to-b from-[#2e2e2e] to-[#a3a3a3]">
                    <div className="absolute inset-0"><Model /></div>
                    <ViewCube />
                    <NavBar />
                </div>
            </div>
        </div>
    </main>
);

/* ---------- bottom bars ---------- */

const StatusBar = () => (
    <div className="flex h-[31px] items-center bg-linear-to-b from-white to-[#a8a8a8] pl-px pt-[3px] text-sm text-black">
        <span className="flex-1">Ready</span>
        <span className="flex h-7 w-10 items-center border-l border-[#c9c9c9] pl-[10px]">1</span>
        <span className="flex h-7 w-[39px] items-center border-l border-[#c9c9c9] pl-2">1</span>
    </div>
);

const TaskButton = ({ label, tone = 'border-transparent', children }) => (
    <button type="button" aria-label={label} className={`flex h-[47px] w-[70px] items-center justify-center border ${tone}`}>{children}</button>
);

const Taskbar = () => (
    <footer className="flex h-12 items-center bg-[linear-gradient(90deg,#69442f_0%,#6f452b_24%,#774b2b_28%,#744b2c_31.700%,#72422f_32%,#72422f_33.400%,#744c2e_33.800%,#68432a_43%,#66422a_47%,#6d482e_50%,#6e432b_54%,#764e32_57%,#71432b_60%,#71422a_64%,#7b4429_70%,#7c4c2b_78%,#6c442c_87%,#8c4c29_94%,#70452b_100%)] text-white">
        <button type="button" aria-label="Start" className="flex w-[60px] justify-center">
            <svg width="32" height="33" viewBox="0 0 32 33" fill="#fff"><path d="M0 4.500l14-2V16H0zM15.500 2.300L32 0v16H15.500zM0 17.500h14V31L0 29zM15.500 17.500H32V33l-16.500-2.300z" /></svg>
        </button>
        <div className="ml-px flex gap-[3px]">
            <TaskButton label="Internet Explorer">
                <svg width="40" height="40" viewBox="0 0 40 40" fill="none">
                    <circle cx="22" cy="22" r="12.5" stroke="#4cc6f4" strokeWidth="7" strokeDasharray="66 12.5" transform="rotate(22 22 22)" />
                    <path d="M10 19h27v5H10z" fill="#4cc6f4" />
                    <path d="M6 37c-7-2-3-14 8-24S37-2 38 4c0 2 0 4-2 7" stroke="#f2bd1c" strokeWidth="3" />
                </svg>
            </TaskButton>
            <TaskButton label="File Explorer">
                <svg width="40" height="40" viewBox="0 0 40 40">
                    <path d="M2 5l2-4h12l2 3h18l3 4v28H1V5z" fill="#e8cd74" /><path d="M1 12h38v25H1z" fill="#f6e08e" />
                    <path d="M6 3h6v2H6z" fill="#3a9a46" /><path d="M15 6h14v2H15z" fill="#fff" /><path d="M14 6h3v2h-3z" fill="#d33" /><path d="M24 8h12v3H24z" fill="#fff" /><path d="M24 8h3v3h-3z" fill="#2d7fd8" />
                    <path d="M5 24h30v15h-7v-8H13v8H5z" fill="#79bde2" /><path d="M5 24h30v4H5z" fill="#b9e1f4" />
                </svg>
            </TaskButton>
            <TaskButton label="Steam">
                <svg width="40" height="40" viewBox="0 0 40 40" fill="none">
                    <rect width="40" height="40" rx="5" fill="#2e2e30" /><path d="M0 18l15 7 8-10 10 4-14 10c-1 6-9 6-10 0L0 25z" fill="#b9babd" />
                    <circle cx="29" cy="14" r="8" fill="#c4c5c8" /><circle cx="29" cy="14" r="5" fill="#b0b1b4" stroke="#333" strokeWidth="1.8" /><circle cx="15" cy="28" r="4" stroke="#333" strokeWidth="1.5" />
                </svg>
            </TaskButton>
            <TaskButton label="Chrome" tone="border-[#a88e80] bg-[#876855]">
                <svg width="36" height="36" viewBox="0 0 36 36">
                    <circle cx="18" cy="18" r="17.5" fill="#fdd00c" />
                    <path d="M18 18L2.800 9.300A17.500 17.500 0 0 1 33.500 10H18z" fill="#d8282a" />
                    <path d="M2.800 9.300a17.500 17.500 0 0 0 13 26L24 22l-13 0z" fill="#45ab48" />
                    <circle cx="18" cy="18" r="8.5" fill="#fff" /><circle cx="18" cy="18" r="6.8" fill="#3a7cc9" />
                </svg>
            </TaskButton>
            <TaskButton label="Firefox">
                <svg width="38" height="38" viewBox="0 0 38 38">
                    <circle cx="20" cy="17" r="16" fill="#1b5fa8" /><path d="M12 4c8-5 16-3 20 1-6-1-9 2-8 6-4-2-8-3-12-7z" fill="#4bb8ec" />
                    <path d="M2 6c2 2 4 2 7 2 2-2 4-3 7-3-2 2-2 4-1 5 2 1 4 1 5 2-2 3-5 2-6 5 0 5 5 8 10 7 5-2 8-8 7-15 2 1 3 3 4 6 1-3 0-6-1-8 3 4 4 9 3 14-2 9-9 15-18 15C8 37 1 30 1 20 1 14 2 10 2 6z" fill="#e8641c" />
                    <path d="M31 6c5 6 6 16-1 23 2-8 3-15 1-23z" fill="#fbd24a" />
                </svg>
            </TaskButton>
            <TaskButton label="Inventor" tone="border-[#e9dfd8] bg-[#a78d7f]">
                <svg width="40" height="40" viewBox="0 0 40 40">
                    <defs><linearGradient id="inv" x1="0" y1="1" x2="1" y2="0"><stop offset="0" stopColor="#f3861c" /><stop offset=".6" stopColor="#fbd9a4" /><stop offset="1" stopColor="#fff" /></linearGradient></defs>
                    <rect width="40" height="40" fill="url(#inv)" />
                    <g transform="translate(8 3) scale(.8 .86)"><InventorMark /></g>
                    <text x="20" y="37" textAnchor="middle" fontFamily="Open Sans, sans-serif" fontWeight="700" fontSize="7" fill="#fff">PRO</text>
                </svg>
            </TaskButton>
        </div>
        <div className="ml-auto flex items-center pt-[3px]">
            <Caret w={9} color="#fff" className="mr-5 rotate-180" />
            <svg width="20" height="20" viewBox="0 0 20 20" fill="none" className="mr-3"><path d="M2 1v4M6 1v4M1 5h6v3L5 10H3L1 8zM4 10v9" stroke="#fff" strokeWidth="1.4" /><path d="M10 3h8v15h-8zM12 1h4v2h-4z" stroke="#fff" strokeWidth="1.4" /><path d="M11 9h6v8h-6z" fill="#fff" /></svg>
            <svg width="16" height="17" viewBox="0 0 16 17" fill="#fff" className="mr-[14px]"><path d="M0 14h2v3H0zM3.300 11h2v6h-2zM6.600 8h2v9h-2zM10 4h2v13h-2zM13.300 0h2v17h-2z" /></svg>
            <svg width="17" height="20" viewBox="0 0 17 20" className="mr-[17px]"><path d="M1 6h2v8H1zM4 6l5-5v18l-5-5z" fill="#fff" /><path d="M14 6c2 2 2 6 0 8" stroke="#fff" fill="none" /></svg>
            <span className="mr-[18px] text-sm">POR</span>
            <time className="mr-[19px] text-center text-sm leading-[22px]"><span className="block">7:43 PM</span><span className="block">3/22/2014</span></time>
        </div>
    </footer>
);

export default function App() {
    return (
        <div className="relative flex h-screen flex-col overflow-hidden bg-[#f0f0f0] font-['Open_Sans',sans-serif]">
            <TitleBar />
            <Tabs />
            <button type="button" aria-label="Application menu" className="absolute left-0 top-0 flex h-[41px] w-[41px] items-center border border-black bg-linear-to-b from-[#9b9b9b] to-[#d0d0d0]">
                <svg width="30" height="38" viewBox="0 0 30 38">
                    <g transform="translate(5 2) scale(.8 .85)"><InventorMark /></g>
                    <text x="18" y="36" textAnchor="middle" fontFamily="Open Sans, sans-serif" fontWeight="600" fontSize="8" fill="#000">PRO</text>
                </svg>
                <Caret w={7} />
            </button>
            <Ribbon />
            <div className="flex min-h-0 flex-1 border-t border-[#6b6b6b]">
                <Browser />
                <DocumentWindow />
            </div>
            <StatusBar />
            <Taskbar />
        </div>
    );
}
